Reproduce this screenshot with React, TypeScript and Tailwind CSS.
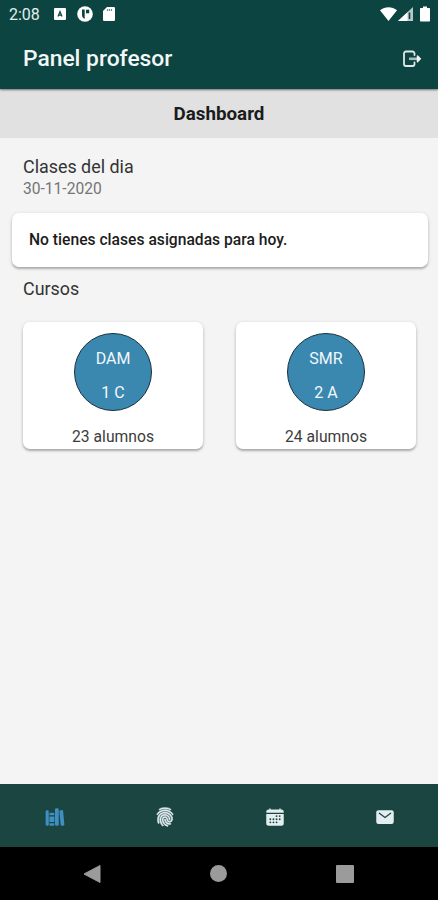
import type { ReactNode } from "react";
import {
  IoCalendar,
  IoFingerPrint,
  IoLibrary,
  IoMail,
} from "react-icons/io5";

interface Curso {
  nombre: string;
  grupo: string;
  alumnos: number;
}

const cursos: Curso[] = [
  { nombre: "DAM", grupo: "1 C", alumnos: 23 },
  { nombre: "SMR", grupo: "2 A", alumnos: 24 },
];

const cardShadow =
  "shadow-[0_2px_2px_rgba(0,0,0,0.22),0_1px_4px_rgba(0,0,0,0.14)]";

function StatusBar() {
  return (
    <div className="flex h-7 items-center pl-[9px] pr-2 text-white">
      <span className="w-[45px] pt-[2px] text-[16px] leading-6 text-[#e4eeed]">
        2:08
      </span>
      <svg className="h-3 w-3" viewBox="0 0 12 12">
        <rect width="12" height="12" rx="1" fill="#fff" />
        <path
          d="M4 8.5 6 3.5 8 8.5M4.6 7.2h2.8"
          fill="none"
          stroke="#0b4441"
          strokeWidth="1.2"
        />
      </svg>
      <svg className="ml-[11px] h-4 w-4" viewBox="0 0 16 16">
        <circle cx="8" cy="8" r="7.8" fill="#fff" />
        <path d="M5 3.5h2.700v9.300c-1.900-.4-2.700-2-2.700-4.300z" fill="#0b4441" />
        <path d="M9 3.700h3.200v3.600H9z" fill="#0b4441" />
      </svg>
      <svg className="ml-[10px] h-[14px] w-[12px]" viewBox="0 0 12 14">
        <path
          d="M4 0h6.6C11.4 0 12 .5 12 1.3v11.4c0 .8-.6 1.3-1.4 1.3H1.4C.6 14 0 13.5 0 12.7V4z"
          fill="#fff"
        />
        <path
          d="M4.5 2v2M6.5 2v2M8.5 2v2"
          stroke="#0b4441"
          strokeWidth="1.2"
          opacity="0.6"
        />
      </svg>
      <svg className="ml-auto h-[14px] w-[17px]" viewBox="0 0 17 14">
        <path d="M0 3.2C5-.9 12-.9 17 3.2L8.5 14z" fill="#fff" />
      </svg>
      <svg className="ml-[1px] h-[14px] w-[15px]" viewBox="0 0 15 14">
        <path d="M15 0v14H0z" fill="#b9c8c7" />
        <path d="M9.5 5.2V14H0z" fill="#fff" />
        <path d="M11.5 5.5v6.5" stroke="#0b4441" strokeWidth="1.6" />
      </svg>
      <svg className="ml-[7px] h-4 w-[10px]" viewBox="0 0 10 16">
        <path
          d="M3 .5h4V2h2c.6 0 1 .4 1 1v11.5c0 .6-.4 1-1 1H1c-.6 0-1-.4-1-1V3c0-.6.4-1 1-1h2z"
          fill="#fff"
        />
      </svg>
    </div>
  );
}

function LogOutIcon() {
  return (
    <svg className="h-[18px] w-[20px]" viewBox="0 0 20 18" fill="none">
      <path
        d="M12.500 5V3.500a2 2 0 0 0-2-2H4a2 2 0 0 0-2 2v10.500a2 2 0 0 0 2 2h6.500a2 2 0 0 0 2-2v-1.500"
        stroke="#dfe9e8"
        strokeWidth="1.8"
        strokeLinecap="round"
      />
      <path d="M7 8.800h9" stroke="#a9bbba" strokeWidth="2.600" />
      <path
        d="m15.500 6 2.800 2.800-2.800 2.800z"
        fill="#f1f6f5"
        stroke="#f1f6f5"
        strokeWidth="1.500"
        strokeLinecap="round"
        strokeLinejoin="round"
      />
    </svg>
  );
}

function CursoCard({ curso }: { curso: Curso }) {
  return (
    <div
      className={`flex h-[127px] w-[180px] flex-col items-center rounded-[7px] bg-white pt-[11px] ${cardShadow}`}
    >
      <div className="flex h-[78px] w-[78px] flex-col items-center justify-center rounded-full border border-[#17303d] bg-[#3a88b0] pt-[7px] text-[16px] leading-[34px] text-[#f1f8fb]">
        <span>{curso.nombre}</span>
        <span>{curso.grupo}</span>
      </div>
      <span className="mt-4 text-[15.7px] leading-[20px] text-[#3c3c3c]">
        {curso.alumnos} alumnos
      </span>
    </div>
  );
}

function Tab({ children, active }: { children: ReactNode; active?: boolean }) {
  return (
    <button
      className={`flex flex-1 items-center justify-center text-[20px] ${
        active ? "text-[#3f8fc0]" : "text-[#e3eef0]"
      }`}
    >
      {children}
    </button>
  );
}

export default function App() {
  return (
    <div className="flex h-[900px] w-[438px] flex-col overflow-hidden bg-[#f4f4f4] font-[Roboto,sans-serif]">
      {/* Header */}
      <header className="relative h-[89px] shrink-0 bg-[#0b4441] shadow-[0_1px_2px_rgba(0,0,0,0.5)]">
        <StatusBar />
        <div className="flex h-[61px] items-center justify-between pl-[23px] pr-4">
          <h1 className="pt-[2px] text-[22.8px] font-medium text-[#f3f7f7]">
            Panel profesor
          </h1>
          <LogOutIcon />
        </div>
      </header>

      <div className="flex h-[49px] shrink-0 items-center justify-center bg-[#e1e1e1] pt-[2px]">
        <h2 className="text-[18.8px] font-bold text-[#1b1b1b]">Dashboard</h2>
      </div>

      {/* Content */}
      <main className="flex-1">
        <div className="px-[23px] pt-[18px]">
          <p className="text-[17.9px] leading-[22px] text-[#333]">
            Clases del dia
          </p>
          <p className="text-[15.6px] leading-[22px] text-[#757575]">
            30-11-2020
          </p>
        </div>

        <div
          className={`ml-3 mr-[10px] mt-[13px] flex h-[54px] items-center rounded-[7px] bg-white px-[17px] ${cardShadow}`}
        >
          <p className="text-[15.65px] font-medium text-[#1c1c1c]">
            No tienes clases asignadas para hoy.
          </p>
        </div>

        <p className="mt-[11px] px-[23px] text-[17.9px] leading-[22px] text-[#333]">
          Cursos
        </p>

        <div className="mt-[22px] flex justify-between pl-[23px] pr-[22px]">
          {cursos.map((curso) => (
            <CursoCard key={curso.nombre} curso={curso} />
          ))}
        </div>
      </main>

      {/* Tabs */}
      <nav className="-mr-[2px] flex h-[63px] shrink-0 bg-[#1a4541] pt-[2px]">
        <Tab active>
          <IoLibrary />
        </Tab>
        <Tab>
          <IoFingerPrint strokeWidth={16} />
        </Tab>
        <Tab>
          <IoCalendar />
        </Tab>
        <Tab>
          <IoMail />
        </Tab>
      </nav>

      {/* Android navigation */}
      <div className="flex h-[53px] shrink-0 items-center justify-between bg-black pl-[83px] pr-[84px]">
        <svg className="h-[18px] w-[18px]" viewBox="0 0 18 18">
          <path d="M17 .5v17L1 9z" fill="#9b9b9b" stroke="#9b9b9b" strokeLinejoin="round" />
        </svg>
        <span className="h-[17px] w-[17px] rounded-full bg-[#9b9b9b]" />
        <span className="h-[18px] w-[18px] rounded-[1px] bg-[#9b9b9b]" />
      </div>
    </div>
  );
}
